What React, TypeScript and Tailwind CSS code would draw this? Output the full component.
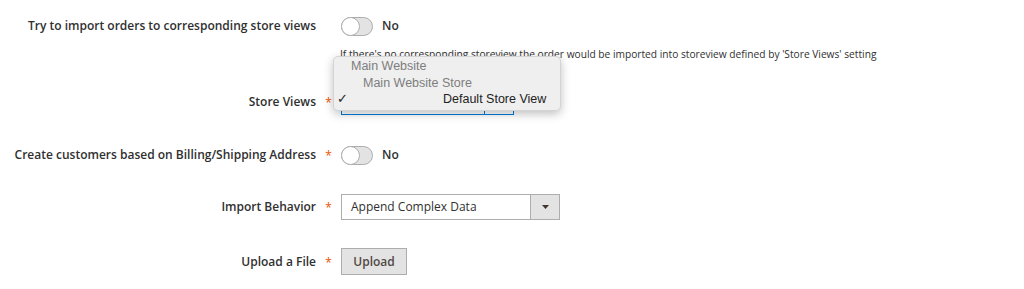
import React from 'react';

const Star = () => <span className="text-[#eb5202] text-[12px] leading-none">*</span>;

const Toggle = () => (
  <div className="flex items-center gap-[9px]">
    <div className="relative w-[32px] h-[19px] rounded-full bg-[#e3e3e3] border border-[#adadad]">
      <div className="absolute left-[-1px] top-[-1px] w-[19px] h-[19px] rounded-full bg-white border border-[#adadad]" />
    </div>
    <span className="text-[12px] text-[#303030] font-semibold">No</span>
  </div>
);

const Row = ({ label, required, children, className }: { label: string; required?: boolean; children?: React.ReactNode; className?: string }) => (
  <div className={`flex items-center ${className ?? ''}`}>
    <div className="w-[316px] text-right text-[12px] font-semibold text-[#303030]">{label}</div>
    <div className="w-[25px] flex justify-center pt-[2px]">{required && <Star />}</div>
    <div className="flex-1">{children}</div>
  </div>
);

export default function App() {
  return (
    <div className="w-[1024px] h-[289px] bg-white relative overflow-hidden" style={{ fontFamily: '"Open Sans", sans-serif' }}>
      <div className="flex flex-col pt-[16px]">
        <Row label="Try to import orders to corresponding store views" className="h-[20px]">
          <Toggle />
        </Row>
        <div className="pl-[340px] mt-[13px] text-[10.2px] text-[#303030] leading-none">
          If there's no corresponding storeview the order would be imported into storeview defined by 'Store Views' setting
        </div>
        <Row label="Store Views" required className="mt-[30px] h-[26px]">
          <div className="w-[173px] h-[26px] border border-[#007bdb] bg-white flex">
            <div className="flex-1" />
            <div className="w-[29px] border-l border-[#007bdb]" />
          </div>
        </Row>
        <Row label="Create customers based on Billing/Shipping Address" required className="mt-[29px] h-[22px]">
          <Toggle />
        </Row>
        <Row label="Import Behavior" required className="mt-[28px] h-[26px]">
          <div className="w-[219px] h-[26px] border border-[#adadad] bg-white flex items-center">
            <span className="flex-1 pl-[9px] text-[12px] text-[#303030]">Append Complex Data</span>
            <div className="w-[29px] h-full bg-[#e3e3e3] border-l border-[#adadad] flex items-center justify-center">
              <svg width="7" height="4" viewBox="0 0 7 4"><path d="M0 0h7L3.5 4z" fill="#41362f" /></svg>
            </div>
          </div>
        </Row>
        <Row label="Upload a File" required className="mt-[28px] h-[27px]">
          <button className="w-[66px] h-[27px] bg-[#e3e3e3] border border-[#adadad] text-[12px] font-semibold text-[#514943]">
            Upload
          </button>
        </Row>
      </div>

      <div
        className="absolute left-[333px] top-[56px] w-[228px] h-[55px] rounded-[5px] bg-[#efefef] border border-[#d4d4d4] shadow-[0_3px_10px_rgba(0,0,0,0.25)] text-[12.5px] leading-none"
        style={{ fontFamily: '"Liberation Sans", Arial, sans-serif' }}
      >
        <div className="absolute left-[17px] top-[3px] text-[#7d7d7d]">Main Website</div>
        <div className="absolute left-[29px] top-[20px] text-[#7d7d7d]">Main Website Store</div>
        <div className="absolute left-[3px] top-[36px] text-[#222]">✓</div>
        <div className="absolute left-[109px] top-[36px] text-[#222]">Default Store View</div>
      </div>
    </div>
  );
}
